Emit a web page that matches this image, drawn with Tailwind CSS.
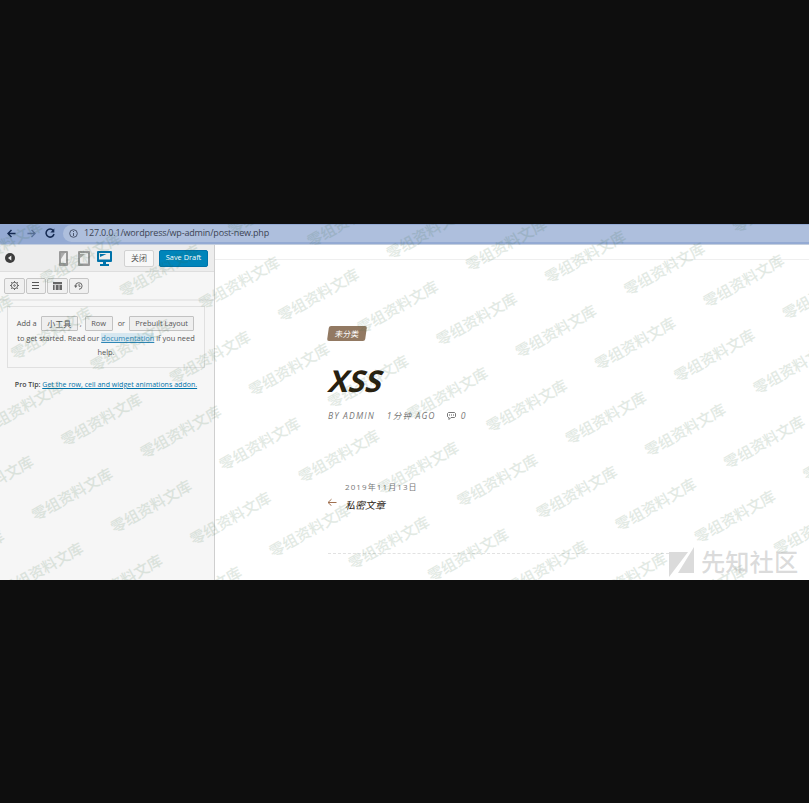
<!DOCTYPE html>
<html lang="zh">
<head>
<meta charset="utf-8">
<title>post-new.php</title>
<script src="https://cdn.jsdelivr.net/npm/@tailwindcss/browser@4"></script>
</head>
<body class="h-[803px] w-[809px] overflow-hidden bg-[#0e0e0e] pt-[224px] font-['Open_Sans','Noto_Sans_CJK_SC',sans-serif]">
<div class="relative flex h-[356px] w-[809px] flex-col overflow-hidden bg-white">
  <header class="flex h-[21px] shrink-0 items-center border-b border-[#c3cede] bg-[#94aad3] pb-[2px] text-[#1d2c4c]">
    <svg class="ml-[7px] h-[9px] w-[9px] shrink-0" viewBox="0 0 10 10" fill="none" stroke="#152a52" stroke-width="1.6"><path d="M9.500 5H1.500M5 1L1 5l4 4"/></svg>
    <svg class="ml-[11px] h-[9px] w-[9px] shrink-0" viewBox="0 0 10 10" fill="none" stroke="#5a709c" stroke-width="1.4"><path d="M.5 5h8M5 1l4 4-4 4"/></svg>
    <svg class="ml-[9px] h-[10px] w-[10px] shrink-0" viewBox="0 0 10 10" fill="none" stroke="#152a52" stroke-width="1.5"><path d="M8.300 2.700A4 4 0 1 0 9 6"/><path d="M9.300 .5v4h-4z" fill="#152a52" stroke="none"/></svg>
    <div class="ml-[8px] flex h-[17px] flex-1 items-center rounded-l-full bg-[#aebfdd] pl-[6px]">
      <svg class="h-[9px] w-[9px]" viewBox="0 0 9 9" fill="none" stroke="#4b566e"><circle cx="4.500" cy="4.500" r="3.800"/><path d="M4.500 4v3M4.500 2v1"/></svg>
      <span class="ml-[6px] whitespace-nowrap text-[9px] leading-[16px] tracking-[-0.170px] text-[#3c4454]">127.0.0.1/wordpress/wp-admin/post-new.php</span>
    </div>
  </header>
  <div class="flex min-h-0 flex-1">
    <aside class="flex w-[215px] shrink-0 flex-col border-r border-[#cfcfcf] bg-[#f6f6f6] text-[7.450px] text-[#555]">
      <div class="flex h-[27px] shrink-0 items-center border-b border-[#dedede] bg-[#ededed]">
        <svg class="ml-[5px] h-[10px] w-[10px]" viewBox="0 0 10 10"><circle cx="5" cy="5" r="5" fill="#3c3c3c"/><path d="M6.300 2.500v5L3 5z" fill="#eee"/></svg>
        <svg class="ml-[44px] h-[15px] w-[9px]" viewBox="0 0 9 15"><path fill="#999" fill-rule="evenodd" d="M1 0h7a1 1 0 0 1 1 1v13a1 1 0 0 1-1 1H1a1 1 0 0 1-1-1V1a1 1 0 0 1 1-1zM2 2v10h5V2z"/><path d="M2 2h4L2 8z" fill="#aaa"/></svg>
        <svg class="ml-[10px] h-[15px] w-[12px]" viewBox="0 0 12 15"><path fill="#999" fill-rule="evenodd" d="M1 0h10a1 1 0 0 1 1 1v13a1 1 0 0 1-1 1H1a1 1 0 0 1-1-1V1a1 1 0 0 1 1-1zM2 2v10.500h8V2z"/><path d="M2 3h5L2 7z" fill="#aaa"/></svg>
        <svg class="ml-[7px] h-[15px] w-[15px]" viewBox="0 0 15 15"><path fill="#0073aa" fill-rule="evenodd" d="M1 0h13a1 1 0 0 1 1 1v9a1 1 0 0 1-1 1H9v2h3v2H3v-2h3v-2H1a1 1 0 0 1-1-1V1a1 1 0 0 1 1-1zM2 2v6.500h11V2z"/><path d="M3 3h6.500L3 6z" fill="#0073aa"/></svg>
        <div class="ml-[12px] flex h-[17px] w-[30px] items-center justify-center rounded-[2px] border border-[#d2d2d2] bg-[#f8f8f8] text-[8px]">关闭</div>
        <div class="ml-[5px] flex h-[17px] w-[49px] items-center justify-center rounded-[2px] border border-[#0073aa] bg-[#0085ba] text-[7.400px] whitespace-nowrap text-white">Save Draft</div>
      </div>
      <div class="flex h-[29px] shrink-0 items-center gap-[1px] border-b-2 border-[#e9e9e9] pl-[4px]">
        <div class="flex h-[16px] w-[21px] items-center justify-center rounded-[2px] border border-[#c6c6c6] bg-[#f0f0f0]"><svg class="h-[9px] w-[9px]" viewBox="0 0 9 9" fill="none" stroke="#666"><circle cx="4.500" cy="4.500" r="3.200"/><circle cx="4.500" cy="4.500" r=".8"/><path d="M4.500 0v1.500M4.500 7.500V9M0 4.500h1.500M7.500 4.500H9M1.200 1.200l1 1M6.800 6.800l1 1M1.200 7.800l1-1M6.800 2.200l1-1"/></svg></div>
        <div class="flex h-[16px] w-[20px] items-center justify-center rounded-[2px] border border-[#c6c6c6] bg-[#f0f0f0]"><svg class="-ml-[1px] h-[7px] w-[7px]" viewBox="0 0 7 7" stroke="#555"><path d="M0 .5h7M0 3.500h7M0 6.500h7"/></svg></div>
        <div class="flex h-[16px] w-[21px] items-center justify-center rounded-[2px] border border-[#c6c6c6] bg-[#f0f0f0]"><svg class="-ml-[1px] h-[8px] w-[9px]" viewBox="0 0 9 8"><path d="M0 0h9v8H0z" fill="#ccc"/><path d="M0 0h9v2H0zM0 3h1.500v5H0zM3 3h2.500v5H3zM6.500 3H9v5H6.500z" fill="#666"/></svg></div>
        <div class="flex h-[16px] w-[20px] items-center justify-center rounded-[2px] border border-[#c6c6c6] bg-[#f0f0f0]"><svg class="-ml-[1px] h-[8px] w-[9px]" viewBox="0 0 9 8" fill="none" stroke="#666"><path d="M1.500 4a3.300 3.300 0 1 1 3.500 3.300M5 2v2.300h1.500"/><path d="M0 3.500h3.500L1.700 6z" fill="#666" stroke="none"/></svg></div>
      </div>
      <div class="mx-[7px] mt-[5px] flex h-[62px] w-[198px] shrink-0 flex-col items-center border border-[#e0e0e0] pt-[9px]">
        <div class="flex h-[15px] items-center whitespace-nowrap pr-[1px]">
          <span>Add a</span><span class="ml-[4px] flex h-[15px] w-[37px] items-center justify-center rounded-[1px] border border-[#c2c2c2] bg-[#efefef] text-[8px]">小工具</span><span class="ml-[2px]">,</span>
          <span class="ml-[3px] flex h-[15px] w-[28px] items-center justify-center rounded-[1px] border border-[#c2c2c2] bg-[#efefef]">Row</span><span class="ml-[5px]">or</span>
          <span class="ml-[4px] flex h-[15px] w-[65px] items-center justify-center rounded-[1px] border border-[#c2c2c2] bg-[#efefef]">Prebuilt Layout</span>
        </div>
        <p class="whitespace-nowrap leading-[14px]">to get started. Read our <span class="bg-[#d6e7f0] text-[#2e86b5] underline">documentation</span> if you need</p>
        <p class="leading-[14px]">help.</p>
      </div>
      <p class="mt-[11px] whitespace-nowrap pr-[2px] text-center text-[7px] leading-[12px] text-[#444]"><span class="font-semibold">Pro Tip:</span> <span class="tracking-[0.030px] text-[#0073aa] underline">Get the row, cell and widget animations addon.</span></p>
    </aside>
    <main class="flex-1">
      <div class="h-[15px] border-b border-[#efefef]"></div>
      <div class="pl-[113px] pt-[66px]">
        <div class="flex h-[15px] w-[38px] -skew-x-[8deg] items-center justify-center rounded-[2px] bg-[#927962] text-[8px] text-white">未分类</div>
        <h1 class="ml-[2px] mt-[21px] w-fit -skew-x-[15deg] text-[30px] font-bold leading-[38px] text-[#28200f]">XSS</h1>
        <div class="mt-[10px] flex h-[12px] items-center whitespace-nowrap text-[8.600px] italic tracking-[1.120px] text-[#777]">
          <span>BY ADMIN</span><span class="ml-[12px]">1分钟 AGO</span>
          <svg class="ml-[11px] h-[8px] w-[9px]" viewBox="0 0 9 8" fill="none" stroke="#555"><path d="M1.500 .5h6l1 1v3l-1 1H4l-2 2v-2H1.500l-1-1v-3z" stroke-width=".8"/><path d="M2 3h1M4 3h1M6 3h1"/></svg>
          <span class="ml-[5px]">0</span>
        </div>
        <div class="mt-[59px] pl-[17px] text-[8px] leading-[12px] tracking-[1.100px] text-[#777]">2019年11月13日</div>
        <div class="mt-[3px] flex h-[18px] items-center"><svg class="mb-[6px] -ml-[1px] h-[8px] w-[10px]" viewBox="0 0 10 8" fill="none" stroke="#a0704f"><path d="M9.500 4.500H1M4.500 1.200L1 4.500l3.500 3.300"/></svg><span class="ml-[8px] text-[10px] italic text-[#28200f]">私密文章</span></div>
        <div class="mt-[39px] w-[341px] border-b border-dashed border-[#e2e2e2]"></div>
      </div>
    </main>
  </div>
  <svg id="marks" class="pointer-events-none absolute inset-0 h-[356px] w-[809px] font-['Noto_Sans_CJK_SC',sans-serif] text-[15px] font-medium" fill="#2d6437" stroke="#2d6437" stroke-width=".12" opacity=".135"></svg>
  <div class="absolute left-[669px] top-[323px] flex items-start text-[#999]/35">
    <svg class="h-[31px] w-[26px]" viewBox="0 0 26 31" fill="currentColor"><path d="M0 5h19L0 30zM25 0v26H9z"/></svg>
    <span class="-mt-[1px] ml-[6px] whitespace-nowrap text-[24.300px] leading-[31px] font-medium">先知社区</span>
  </div>
</div>
<script>
// Diagonal watermark grid; labels wholly outside the viewport are skipped.
const marks = document.getElementById('marks');
for (let i = -12; i < 6; i++) for (let j = -3; j < 8; j++) {
  const x = 664.5 + i * 79.2 - j * 29.3, y = 45 + i * 12.1 + j * 74.5;
  if (x < -42 || x > 850 || y < -24 || y > 380) continue;
  const t = document.createElementNS('http://www.w3.org/2000/svg', 'text');
  t.setAttribute('transform', `translate(${x} ${y}) rotate(-29.5)`);
  t.setAttribute('text-anchor', 'middle');
  t.setAttribute('y', '5.5');
  t.textContent = '零组资料文库';
  marks.appendChild(t);
}
</script>
</body>
</html>
